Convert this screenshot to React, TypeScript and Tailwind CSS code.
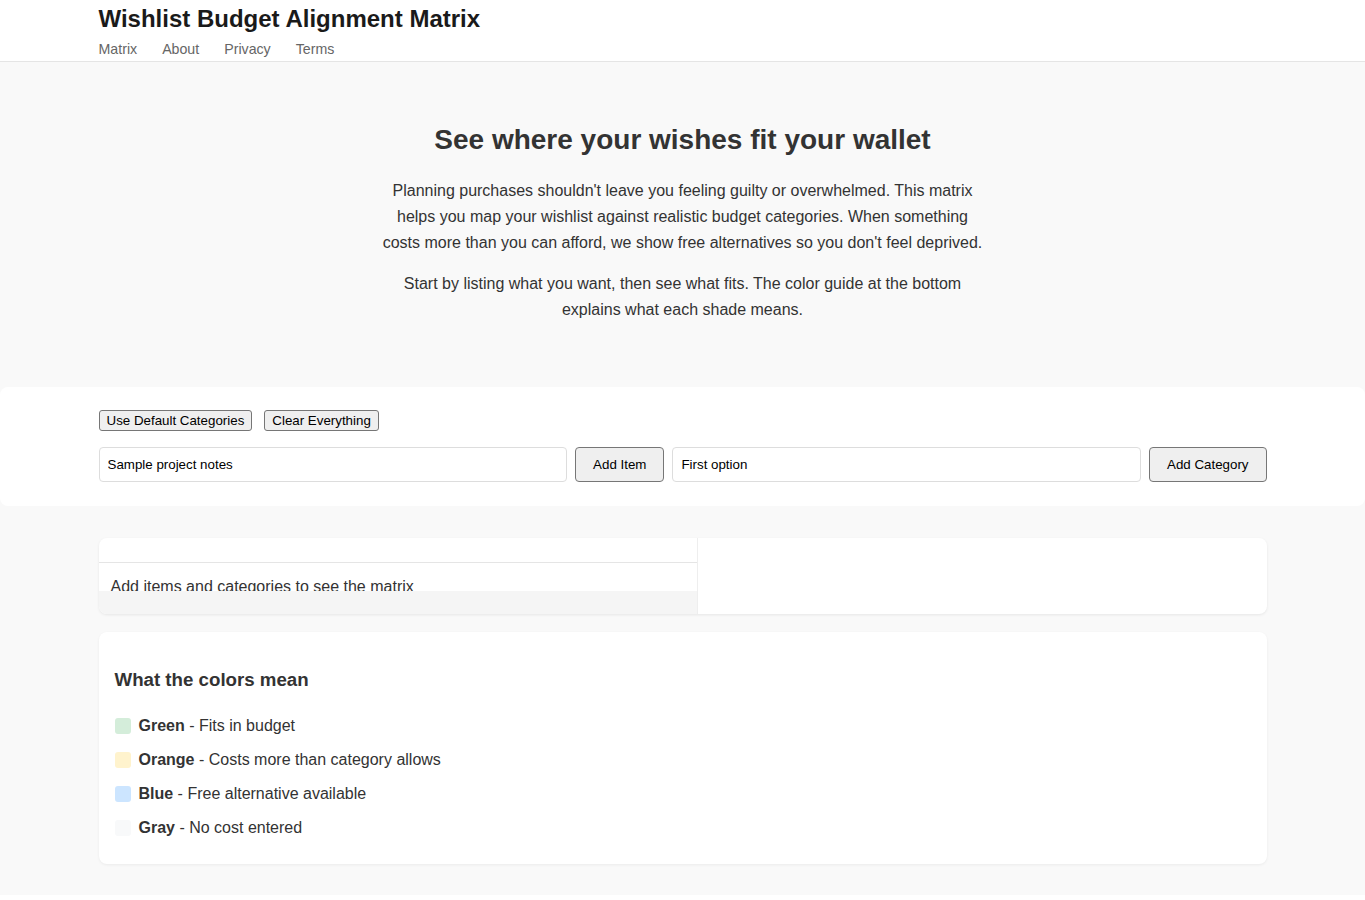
import React, { useState } from 'react';

const legend = [
  { name: 'Green', text: 'Fits in budget', swatch: 'bg-[#d4edda]' },
  { name: 'Orange', text: 'Costs more than category allows', swatch: 'bg-[#fff3cd]' },
  { name: 'Blue', text: 'Free alternative available', swatch: 'bg-[#cce5ff]' },
  { name: 'Gray', text: 'No cost entered', swatch: 'bg-[#f8f9fa]' },
];

export default function App() {
  const [item, setItem] = useState('Sample project notes');
  const [category, setCategory] = useState('First option');

  return (
    <div className="min-h-screen bg-[#f9f9f9] text-[#333] font-['Liberation_Sans',Arial,sans-serif]">
      <header className="bg-white border-b border-[#e5e5e5]">
        <div className="max-w-[1200px] mx-auto px-4 pt-[5px] pb-[3px]">
          <h1 className="text-[24px] leading-[28px] font-bold text-[#1a1a1a]">Wishlist Budget Alignment Matrix</h1>
          <nav className="flex gap-[25px] mt-[7px] text-[14.2px] leading-[18px] text-[#666]">
            <a href="#">Matrix</a>
            <a href="#">About</a>
            <a href="#">Privacy</a>
            <a href="#">Terms</a>
          </nav>
        </div>
      </header>

      <section className="pt-[61px] pb-[64px] px-4 text-center">
        <h2 className="text-[28px] leading-[34px] font-bold text-[#333]">See where your wishes fit your wallet</h2>
        <div className="max-w-[602px] mx-auto mt-[21px] text-[16px] leading-[26px] text-[#333]">
          <p>
            Planning purchases shouldn't leave you feeling guilty or overwhelmed. This matrix helps you map your
            wishlist against realistic budget categories. When something costs more than you can afford, we show
            free alternatives so you don't feel deprived.
          </p>
          <p className="mt-[15px] max-w-[580px] mx-auto">
            Start by listing what you want, then see what fits. The color guide at the bottom explains what each
            shade means.
          </p>
        </div>
      </section>

      <section className="bg-white rounded-lg">
        <div className="max-w-[1200px] mx-auto px-4 pt-[23px] pb-6">
          <div className="flex gap-3 text-[13.33px]">
            <button className="px-[7px] h-[21px] leading-[17px] bg-[#efefef] border border-[#767676] rounded-[3px] text-black">
              Use Default Categories
            </button>
            <button className="px-[7px] h-[21px] leading-[17px] bg-[#efefef] border border-[#767676] rounded-[3px] text-black">
              Clear Everything
            </button>
          </div>
          <div className="flex gap-2 mt-4 text-[13.33px]">
            <input
              value={item}
              onChange={(e) => setItem(e.target.value)}
              className="flex-1 h-[35px] px-2 border border-[#ddd] rounded text-black outline-none"
            />
            <button className="h-[35px] px-[17px] bg-[#efefef] border border-[#767676] rounded text-black">
              Add Item
            </button>
            <input
              value={category}
              onChange={(e) => setCategory(e.target.value)}
              className="flex-1 h-[35px] px-2 border border-[#ddd] rounded text-black outline-none"
            />
            <button className="h-[35px] px-[17px] bg-[#efefef] border border-[#767676] rounded text-black">
              Add Category
            </button>
          </div>
        </div>
      </section>

      <main className="max-w-[1200px] mx-auto px-4 pt-8 pb-[31px]">
        <div className="flex bg-white rounded-lg shadow-[0_1px_3px_rgba(0,0,0,0.08)] overflow-hidden h-[76px]">
          <div className="w-[599px] border-r border-[#eee] flex flex-col">
            <div className="h-[25px] border-b border-[#e5e5e5]" />
            <div className="h-[28px] overflow-hidden px-3 pt-[15px] text-[16px] leading-[18px] text-[#333]">
              Add items and categories to see the matrix
            </div>
            <div className="flex-1 bg-[#f5f5f5]" />
          </div>
          <div className="flex-1" />
        </div>

        <div className="mt-[18px] bg-white rounded-lg shadow-[0_1px_3px_rgba(0,0,0,0.06)] px-4 pt-[37px] pb-[27px]">
          <h3 className="text-[18.7px] leading-[22px] font-bold text-[#333]">What the colors mean</h3>
          <ul className="mt-[25px] flex flex-col gap-[15px] text-[16px] leading-[19px]">
            {legend.map((l) => (
              <li key={l.name} className="flex items-center gap-2">
                <span className={`w-4 h-4 rounded-[3px] ${l.swatch}`} />
                <span>
                  <b>{l.name}</b> - {l.text}
                </span>
              </li>
            ))}
          </ul>
        </div>
      </main>

      <footer className="bg-white h-[60px]" />
    </div>
  );
}
